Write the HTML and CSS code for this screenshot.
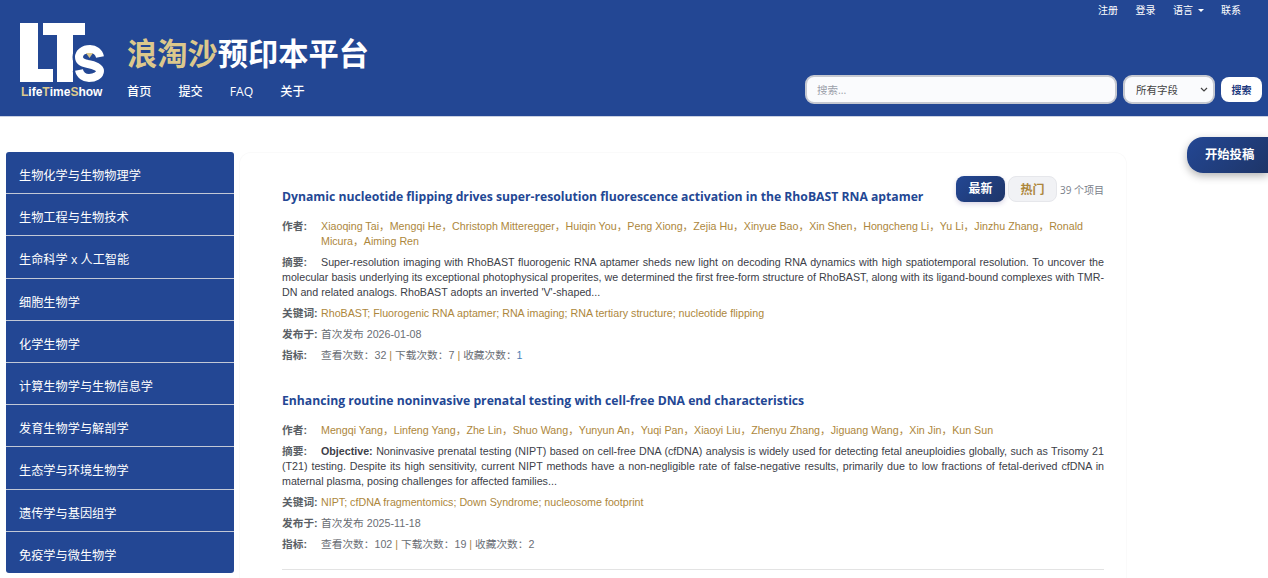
FILE: index.html
```html
<!DOCTYPE html>
<html lang="zh-CN">
<head>
  <meta charset="UTF-8"/>
  <title>浪淘沙预印本平台</title>
  <link rel="stylesheet" href="styles.css">
</head>
<body>

  <header class="masthead">
    <div class="brand-side">
      <div class="logo">
        <svg width="86" height="60" viewBox="0 0 86 60">
          <path fill="#fff" d="M0 0H18V46H33V59H0Z"/>
          <path fill="#fff" d="M23 0H65V12H53V59H37V12H23Z"/>
          <path fill="none" stroke="#234794" stroke-width="13" d="M80 34C79 29 75 26 70 26C63 26 59 30 59 34C59 38 62 40 68 41C75 42 80 45 80 48C80 52 75 55 69 55C64 55 60 52 59 47"/>
          <path fill="none" stroke="#fff" stroke-width="8" d="M80 34C79 29 75 26 70 26C63 26 59 30 59 34C59 38 62 40 68 41C75 42 80 45 80 48C80 52 75 55 69 55C64 55 60 52 59 47"/>
          <path fill="#dcc88c" d="M66 30H73L69.500 35Z"/>
        </svg>
        <div class="logo-name"><b>L</b>ife<b>T</b>ime<b>S</b>how</div>
      </div>
      <div class="brand-text">
        <div class="site-name"><span class="gold">浪淘沙</span>预印本平台</div>
        <nav class="main-nav">
          <a href="#">首页</a>
          <a href="#">提交</a>
          <a href="#">FAQ</a>
          <a href="#">关于</a>
        </nav>
      </div>
    </div>
    <div class="tools-side">
      <div class="user-nav">
        <a href="#">注册</a>
        <a href="#">登录</a>
        <a href="#">语言 <i class="caret"></i></a>
        <a href="#">联系</a>
      </div>
      <form class="search">
        <input type="text" placeholder="搜索...">
        <select><option>所有字段</option></select>
        <button type="button">搜索</button>
      </form>
    </div>
  </header>

  <a class="submit-tab" href="#">开始投稿</a>

  <div class="page">
    <aside class="subjects">
      <a href="#">生物化学与生物物理学</a>
      <a href="#">生物工程与生物技术</a>
      <a href="#">生命科学 x 人工智能</a>
      <a href="#">细胞生物学</a>
      <a href="#">化学生物学</a>
      <a href="#">计算生物学与生物信息学</a>
      <a href="#">发育生物学与解剖学</a>
      <a href="#">生态学与环境生物学</a>
      <a href="#">遗传学与基因组学</a>
      <a href="#">免疫学与微生物学</a>
    </aside>

    <main class="listing">
      <div class="sort-bar">
        <a class="sort active" href="#">最新</a>
        <a class="sort" href="#">热门</a>
        <span class="count">39 个项目</span>
      </div>

      <article class="paper">
        <h3><a href="#">Dynamic nucleotide flipping drives super-resolution fluorescence activation in the RhoBAST RNA aptamer</a></h3>
        <div class="row authors">
          <span class="label">作者:</span>
          <div class="val link">Xiaoqing Tai，Mengqi He，Christoph Mitteregger，Huiqin You，Peng Xiong，Zejia Hu，Xinyue Bao，Xin Shen，Hongcheng Li，Yu Li，Jinzhu Zhang，Ronald Micura，Aiming Ren</div>
        </div>
        <p class="abstract"><span class="label">摘要:</span>Super-resolution imaging with RhoBAST fluorogenic RNA aptamer sheds new light on decoding RNA dynamics with high spatiotemporal resolution. To uncover the molecular basis underlying its exceptional photophysical properites, we determined the first free-form structure of RhoBAST, along with its ligand-bound complexes with TMR-DN and related analogs. RhoBAST adopts an inverted 'V'-shaped...</p>
        <div class="row">
          <span class="label">关键词:</span>
          <div class="val link">RhoBAST; Fluorogenic RNA aptamer; RNA imaging; RNA tertiary structure; nucleotide flipping</div>
        </div>
        <div class="row">
          <span class="label">发布于:</span>
          <div class="val">首次发布 2026-01-08</div>
        </div>
        <div class="row">
          <span class="label">指标:</span>
          <div class="val">查看次数：32 <i class="sep">|</i> 下载次数：7 <i class="sep">|</i> 收藏次数：<span class="num">1</span></div>
        </div>
      </article>

      <article class="paper ruled">
        <h3><a href="#">Enhancing routine noninvasive prenatal testing with cell-free DNA end characteristics</a></h3>
        <div class="row authors">
          <span class="label">作者:</span>
          <div class="val link">Mengqi Yang，Linfeng Yang，Zhe Lin，Shuo Wang，Yunyun An，Yuqi Pan，Xiaoyi Liu，Zhenyu Zhang，Jiguang Wang，Xin Jin，Kun Sun</div>
        </div>
        <p class="abstract"><span class="label">摘要:</span><strong>Objective:</strong> Noninvasive prenatal testing (NIPT) based on cell-free DNA (cfDNA) analysis is widely used for detecting fetal aneuploidies globally, such as Trisomy 21 (T21) testing. Despite its high sensitivity, current NIPT methods have a non-negligible rate of false-negative results, primarily due to low fractions of fetal-derived cfDNA in maternal plasma, posing challenges for affected families...</p>
        <div class="row">
          <span class="label">关键词:</span>
          <div class="val link">NIPT; cfDNA fragmentomics; Down Syndrome; nucleosome footprint</div>
        </div>
        <div class="row">
          <span class="label">发布于:</span>
          <div class="val">首次发布 2025-11-18</div>
        </div>
        <div class="row">
          <span class="label">指标:</span>
          <div class="val">查看次数：102 <i class="sep">|</i> 下载次数：19 <i class="sep">|</i> 收藏次数：2</div>
        </div>
      </article>
    </main>
  </div>

</body>
</html>
```

FILE: styles.css
```css
:root {
  --blue: #234794;
  --navy: #1e3a7e;
  --gold: #ad873c;
  --text: #5a5f66;
}
* {
  box-sizing: border-box;
  margin: 0;
  padding: 0;
}
html, body {
  height: 578px;
  overflow: hidden;
}
body {
  font-family: "Open Sans", "Noto Sans CJK SC", sans-serif;
  background: #fff;
  color: var(--text);
  position: relative;
}
a {
  text-decoration: none;
  color: inherit;
}

/* header */
.masthead {
  height: 117px;
  background: var(--blue);
  border-bottom: 1px solid #c9d0e2;
  display: flex;
  justify-content: space-between;
  padding: 0 6px 0 20px;
}
.brand-side {
  display: flex;
  padding-top: 23px;
}
.logo {
  width: 107px;
}
.logo svg {
  display: block;
}
.logo-name {
  font-family: "Liberation Sans", sans-serif;
  font-size: 12px;
  font-weight: bold;
  color: #fff;
  margin-top: 2px;
  padding-left: 1px;
  white-space: nowrap;
}
.logo-name b {
  color: #dcc88c;
}
.site-name {
  font-family: "Noto Sans CJK SC", sans-serif;
  font-size: 30.250px;
  font-weight: 700;
  line-height: 40px;
  color: #fff;
  margin-top: 9px;
}
.gold {
  color: #dcc88c;
}
.main-nav {
  display: flex;
  gap: 27px;
  margin-top: 10px;
  font-size: 12.200px;
  font-weight: 500;
  line-height: 20px;
  color: #fff;
}
.tools-side {
  display: flex;
  flex-direction: column;
  align-items: flex-end;
  justify-content: space-between;
  padding-bottom: 12px;
}
.user-nav {
  display: flex;
  gap: 17.500px;
  padding: 2px 21px 0 0;
  font-size: 10px;
  line-height: 16px;
  color: #fff;
}
.caret {
  display: inline-block;
  border: 3.500px solid transparent;
  border-top-color: #fff;
  border-bottom: 0;
  vertical-align: 2px;
  margin-left: 2px;
}
.search {
  display: flex;
  align-items: center;
  gap: 6px;
}
.search input {
  width: 312px;
  height: 29px;
  border: 2px solid #c6c9d1;
  border-radius: 9px;
  background: #fafbfd;
  padding: 0 10px;
  font: 10.500px "Open Sans", "Noto Sans CJK SC", sans-serif;
}
.search input::placeholder {
  color: #9aa0aa;
}
.search select {
  width: 92px;
  height: 29px;
  border: 2px solid #c6c9d1;
  border-radius: 9px;
  appearance: none;
  background: #fafbfd url("data:image/svg+xml,%3Csvg xmlns='http://www.w3.org/2000/svg' width='8' height='5'%3E%3Cpath d='M1 1l3 3 3-3' fill='none' stroke='%23444' stroke-width='1.200'/%3E%3C/svg%3E") no-repeat right 5px center;
  padding-left: 11px;
  font: 10.500px "Open Sans", "Noto Sans CJK SC", sans-serif;
  color: #444;
}
.search button {
  width: 41px;
  height: 25px;
  border: none;
  border-radius: 8px;
  background: #fff;
  color: var(--navy);
  font: 600 10px "Open Sans", "Noto Sans CJK SC", sans-serif;
}

/* floating tab */
.submit-tab {
  position: absolute;
  top: 137px;
  right: 0;
  width: 81px;
  height: 36px;
  line-height: 36px;
  padding-left: 18px;
  border-radius: 16px 0 0 16px;
  background: linear-gradient(135deg, #234794, #1e3568);
  box-shadow: 0 3px 8px rgba(0,0,0,.3);
  color: #fff;
  font-size: 12.300px;
  font-weight: 700;
}

/* body */
.page {
  display: flex;
  padding: 35px 0 0 6px;
}
.subjects {
  width: 228px;
  height: 421px;
  flex: none;
  background: var(--blue);
  border-radius: 3px;
  overflow: hidden;
}
.subjects a {
  display: block;
  height: 42.200px;
  line-height: 47px;
  padding-left: 13px;
  font-size: 12.200px;
  color: #fff;
  border-bottom: 1px solid #c2c8d6;
}
.subjects a:last-child {
  border-bottom: none;
}
.listing {
  width: 888px;
  height: 426px;
  margin-left: 5px;
  padding: 34px 22px 0 42px;
  border: 1px solid #fafafa;
  border-bottom: none;
  border-radius: 12px 12px 0 0;
  position: relative;
}
.sort-bar {
  position: absolute;
  top: 23px;
  right: 22px;
  display: flex;
  align-items: center;
  gap: 3px;
}
.sort {
  width: 49px;
  height: 26px;
  line-height: 26px;
  text-align: center;
  border-radius: 8px;
  font-size: 12px;
  font-weight: 600;
  color: var(--gold);
  background: #f1f2f5;
  border: 1px solid #e6e7eb;
}
.sort.active {
  background: linear-gradient(135deg, #234794, #1e3568);
  border: none;
  color: #fff;
  box-shadow: 0 2px 5px rgba(60,40,120,.2);
}
.count {
  font-size: 10px;
  color: #7a808a;
}
.paper {
  padding-bottom: 22.500px;
}
.paper.ruled {
  padding-bottom: 11.500px;
  border-bottom: 1px solid #e3e3e3;
}
.paper h3 {
  font-size: 12.200px;
  font-weight: 700;
  line-height: 20px;
  color: var(--blue);
  margin-bottom: 11.500px;
  white-space: nowrap;
}
.row,
.abstract {
  font-family: "Liberation Sans", "Noto Sans CJK SC", sans-serif;
  font-size: 10.700px;
  line-height: 15px;
  margin-bottom: 6px;
}
.row {
  display: flex;
}
.label {
  display: inline-block;
  width: 39px;
  flex: none;
  font-weight: 600;
  color: var(--text);
}
.val {
  flex: 1;
  color: #6a6e75;
}
.val.link {
  color: var(--gold);
}
.abstract {
  text-align: justify;
  color: #3c4048;
}
.sep {
  font-style: normal;
  color: var(--gold);
}
.num {
  color: #4a7fb5;
}
```
